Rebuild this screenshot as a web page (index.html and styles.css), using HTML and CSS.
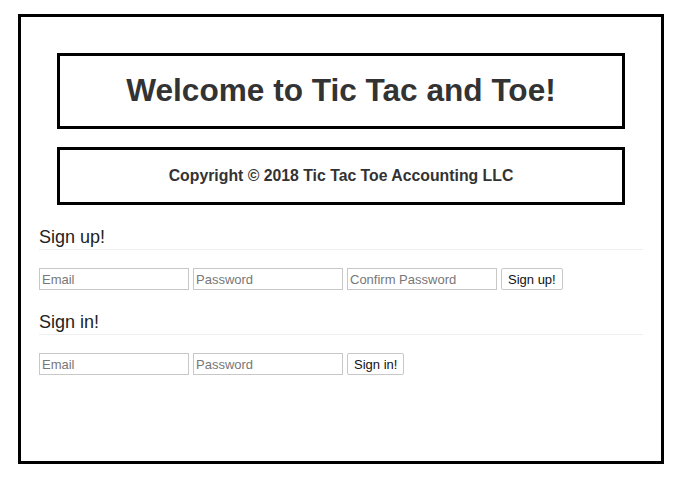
FILE: index.html
```html
<!DOCTYPE html>
<html>
<head>
<meta charset="utf-8">
<link rel="stylesheet" href="styles.css">
</head>
<body>
<div class="frame">
  <div class="container">
    <div class="banner title-box"><h1 class="title">Welcome to Tic Tac and Toe!</h1></div>
    <div class="banner copy-box"><p class="copy">Copyright © 2018 Tic Tac Toe Accounting LLC</p></div>

    <h3 class="section-title">Sign up!</h3>
    <form class="row">
      <input class="field" type="text" placeholder="Email">
      <input class="field" type="password" placeholder="Password">
      <input class="field" type="password" placeholder="Confirm Password">
      <button class="btn" type="button">Sign up!</button>
    </form>

    <h3 class="section-title">Sign in!</h3>
    <form class="row">
      <input class="field" type="text" placeholder="Email">
      <input class="field" type="password" placeholder="Password">
      <button class="btn" type="button">Sign in!</button>
    </form>
  </div>
</div>
</body>
</html>
```

FILE: styles.css
```css
html, body {
  margin: 0;
  padding: 0;
  background: #fff;
}
body {
  font-family: "Liberation Sans", Arial, sans-serif;
  color: #333;
  padding: 14px 18px;
}
.frame {
  width: 640px;
  height: 444px;
  border: 3px solid #000;
}
.container {
  padding: 18px;
}
.banner {
  margin: 0 18px;
  border: 3px solid #000;
  display: flex;
  align-items: center;
  justify-content: center;
}
.title-box {
  margin-top: 18px;
  height: 70px;
}
.copy-box {
  margin-top: 18px;
  height: 52px;
}
.title {
  margin: 0;
  font-size: 31.6px;
  font-weight: bold;
  line-height: 1;
  color: #333;
}
.copy {
  margin: 0;
  font-size: 15.8px;
  font-weight: bold;
  color: #333;
}
.section-title {
  margin: 22px 0 0;
  font-size: 18px;
  font-weight: normal;
  line-height: 20px;
  padding-bottom: 2px;
  border-bottom: 1px solid #eee;
  color: #222;
}
.row {
  margin: 18px 0 0;
  display: flex;
  gap: 4px;
  align-items: center;
}
.field {
  box-sizing: border-box;
  width: 150px;
  height: 22px;
  border: 1px solid #c8c8c8;
  padding: 0 2px;
  font-family: "Liberation Sans", Arial, sans-serif;
  font-size: 13px;
  color: #333;
  background: #fff;
  border-radius: 0;
  outline: none;
}
.field::placeholder {
  color: #777;
}
.btn {
  box-sizing: border-box;
  height: 22px;
  padding: 0 6px;
  border: 1px solid #c8c8c8;
  border-radius: 2px;
  background: #fff;
  font-family: "Liberation Sans", Arial, sans-serif;
  font-size: 13px;
  color: #111;
}
.row + .section-title {
  margin-top: 22px;
}
```
